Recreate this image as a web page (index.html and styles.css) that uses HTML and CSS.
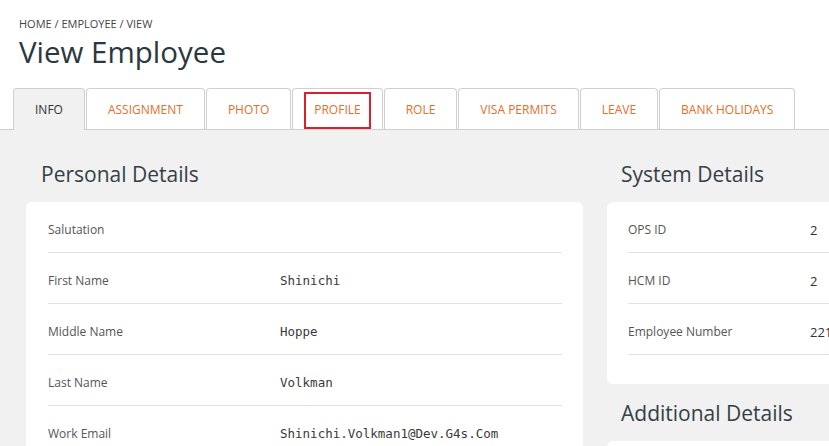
FILE: index.html
```html
<!DOCTYPE html>
<html lang="en">
<head>
<meta charset="utf-8">
<title>View Employee</title>
<link rel="stylesheet" href="styles.css">
</head>
<body>
<header class="page-header">
  <div class="breadcrumb">HOME / EMPLOYEE / VIEW</div>
  <h1 class="page-title">View Employee</h1>
</header>
<nav class="tabs">
  <a class="tab tab-active">INFO</a>
  <a class="tab">ASSIGNMENT</a>
  <a class="tab">PHOTO</a>
  <a class="tab tab-marked">PROFILE<span class="mark"></span></a>
  <a class="tab">ROLE</a>
  <a class="tab">VISA PERMITS</a>
  <a class="tab">LEAVE</a>
  <a class="tab">BANK HOLIDAYS</a>
</nav>
<main class="content">
  <section class="col-main">
    <h2 class="section-title">Personal Details</h2>
    <div class="card card-main">
      <div class="row"><span class="label">Salutation</span><span class="value"></span></div>
      <div class="row"><span class="label">First Name</span><span class="value">Shinichi</span></div>
      <div class="row"><span class="label">Middle Name</span><span class="value">Hoppe</span></div>
      <div class="row"><span class="label">Last Name</span><span class="value">Volkman</span></div>
      <div class="row"><span class="label">Work Email</span><span class="value">Shinichi.Volkman1@Dev.G4s.Com</span></div>
      <div class="row"><span class="label">Phone</span><span class="value"></span></div>
    </div>
  </section>
  <aside class="col-side">
    <h2 class="section-title">System Details</h2>
    <div class="card card-side">
      <div class="row"><span class="label">OPS ID</span><span class="value-num">2</span></div>
      <div class="row"><span class="label">HCM ID</span><span class="value-num">2</span></div>
      <div class="row"><span class="label">Employee Number</span><span class="value-num">221</span></div>
    </div>
    <h2 class="section-title section-title-next">Additional Details</h2>
    <div class="card card-side">
      <div class="row"><span class="label">&nbsp;</span><span class="value-num"></span></div>
    </div>
  </aside>
</main>
</body>
</html>
```

FILE: styles.css
```css
html, body {
  margin: 0;
  padding: 0;
  overflow: hidden;
  background: #ffffff;
  font-family: "Open Sans", "Noto Sans", sans-serif;
  color: #333;
}

.page-header {
  padding: 17px 0 0 19px;
}

.breadcrumb {
  font-size: 11px;
  line-height: 13px;
  color: #444;
}

.page-title {
  margin: 4px 0 18px;
  font-size: 29.5px;
  line-height: 36px;
  font-weight: 400;
  color: #2b3840;
}

.tabs {
  display: flex;
  gap: 1px;
  padding-left: 13px;
  border-bottom: 1px solid #cfcfcf;
  height: 41px;
}

.tab {
  position: relative;
  display: flex;
  align-items: center;
  justify-content: center;
  padding: 0 21px;
  height: 41px;
  box-sizing: border-box;
  border: 1px solid #cfcfcf;
  border-bottom: none;
  border-radius: 4px 4px 0 0;
  background: #fff;
  font-size: 12px;
  color: #e26f2c;
  cursor: pointer;
}

.tab-active {
  background: #f1f1f1;
  color: #333;
  height: 42px;
}

.mark {
  position: absolute;
  left: 11px;
  top: 3px;
  width: 67px;
  height: 37px;
  box-sizing: border-box;
  border: 2px solid #d8212b;
}

.content {
  display: flex;
  gap: 24px;
  width: 1200px;
  height: 400px;
  padding: 30px 0 0 26px;
  background: #f1f1f1;
}

.col-main {
  flex: 0 0 557px;
}

.col-side {
  flex: 0 0 360px;
}

.section-title {
  margin: 0 0 14px;
  padding-left: 15px;
  font-size: 21px;
  line-height: 28px;
  font-weight: 400;
  color: #353f46;
}

.col-side .section-title {
  padding-left: 14px;
}

.section-title-next {
  margin-top: 15px;
}

.card {
  background: #fff;
  border-radius: 6px;
}

.card-main {
  padding: 0 21px 0 22px;
}

.card-side {
  padding: 0 0 29px 21px;
}

.row {
  display: grid;
  align-items: center;
  padding: 20px 0 14px;
  line-height: 16px;
  border-bottom: 1px solid #e2e2e2;
}

.card-main .row {
  grid-template-columns: 232px 1fr;
}

.card-side .row {
  grid-template-columns: 182px 1fr;
}

.label {
  font-size: 12px;
  color: #555;
}

.value {
  font-family: "DejaVu Sans Mono", "Liberation Mono", monospace;
  font-size: 12.5px;
  color: #3a3a3a;
}

.value-num {
  font-size: 13px;
  color: #333;
}
```
